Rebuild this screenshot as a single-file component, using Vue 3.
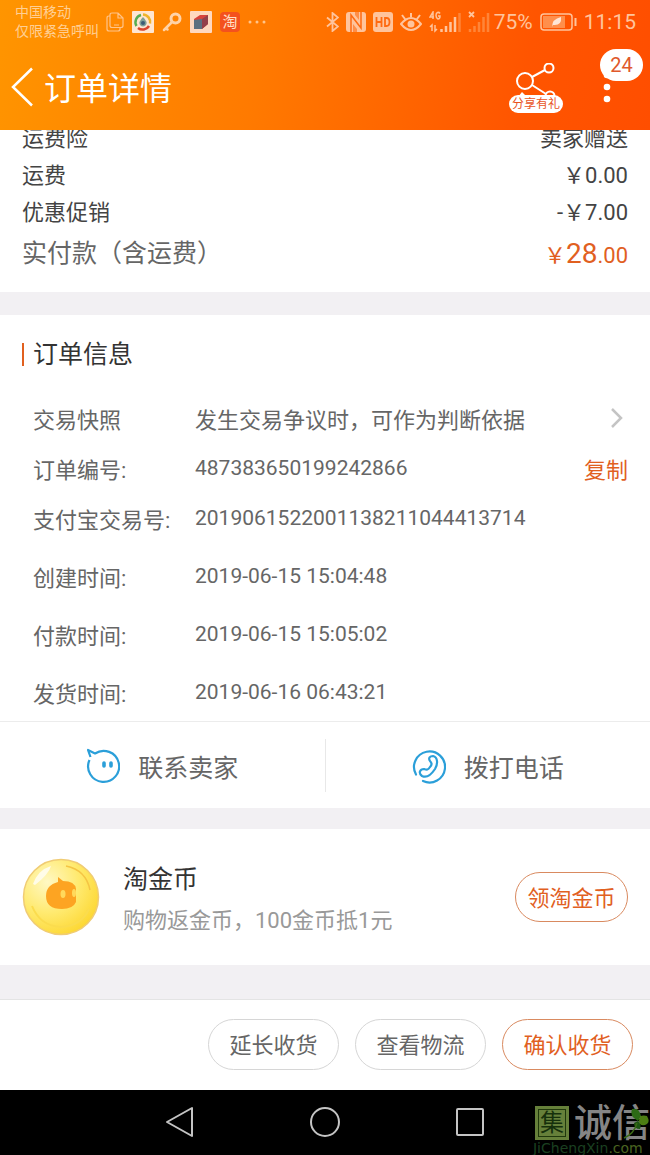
<script setup>
const fees = [
  { label: '运费险', value: '卖家赠送' },
  { label: '运费', value: '￥0.00' },
  { label: '优惠促销', value: '-￥7.00' },
]

const details = [
  { label: '订单编号:', value: '487383650199242866', copy: true },
  { label: '支付宝交易号:', value: '2019061522001138211044413714' },
  { label: '创建时间:', value: '2019-06-15 15:04:48', spaced: true },
  { label: '付款时间:', value: '2019-06-15 15:05:02', spaced: true },
  { label: '发货时间:', value: '2019-06-16 06:43:21', spaced: true },
]

const actions = [
  { text: '延长收货' },
  { text: '查看物流' },
  { text: '确认收货', primary: true },
]
</script>

<template>
  <div class="page">
    <header class="top">
      <div class="status">
        <div class="carrier">
          <div>中国移动</div>
          <div>仅限紧急呼叫</div>
        </div>
        <div class="notices">
          <svg width="18" height="20" viewBox="0 0 18 20" fill="none" stroke="#ffc48a" stroke-width="1.2">
            <path d="M6 1h6l5 5v7.500q0 2-2 2H6q-2 0-2-2V3q0-2 2-2zM12 1v5h5M4 4H3Q1 4 1 6v11q0 2 2 2h9q2 0 2-2v-1M8 13h5" />
          </svg>
          <svg width="22" height="22" viewBox="0 0 22 22">
            <rect width="22" height="22" rx="1" fill="#ffe6d2" />
            <path d="M4.500 15A7.500 7.500 0 0 1 9 4" fill="none" stroke="#58ad50" stroke-width="2.500" />
            <path d="M11 3.500a7.500 7.500 0 0 1 7 9" fill="none" stroke="#efb42c" stroke-width="2.500" />
            <path d="M17 15a7.500 7.500 0 0 1-11 2" fill="none" stroke="#d9452d" stroke-width="2.500" />
            <path d="M11 6q5 5 3 8-3 3-6 0-2-3 3-8z" fill="#7fa097" />
            <circle cx="11" cy="12" r="2" fill="#3c5a75" />
          </svg>
          <svg width="20" height="20" viewBox="0 0 20 20" fill="none" stroke="#ffd3a8" stroke-linecap="round">
            <circle cx="13.500" cy="6.500" r="4.500" stroke-width="3" />
            <path d="M10 10l-8 8M4 16l1.500 1.500" stroke-width="2.500" />
          </svg>
          <svg width="22" height="22" viewBox="0 0 22 22">
            <rect width="22" height="22" rx="1" fill="#ffd9c0" />
            <path d="M4 8l6-4h8v9l-6 5H4z" fill="#d8433d" />
            <path d="M4 9l8-1v10H4z" fill="#5d7180" />
            <path d="M12 8l6-4v9l-6 5z" fill="#94404a" />
          </svg>
          <span class="tao">淘</span>
          <svg width="18" height="4" viewBox="0 0 18 4" fill="#ffc48a">
            <circle cx="2" cy="2" r="1.500" /><circle cx="9" cy="2" r="1.500" /><circle cx="16" cy="2" r="1.500" />
          </svg>
        </div>
        <div class="system">
          <svg width="13" height="20" viewBox="0 0 13 20" fill="none" stroke="#ffc49c" stroke-width="1.800">
            <path d="M1 5.500l11 9-5.500 4.500V1L12 5.500l-11 9" />
          </svg>
          <svg width="20" height="20" viewBox="0 0 20 20">
            <rect width="20" height="20" rx="3" fill="#ffc49c" />
            <path d="M5 20V3l10 13V0" fill="none" stroke="#ff6a10" stroke-width="1.500" />
            <path d="M9 3l4 5V0H9zM7 20v-8l4 5v3z" fill="#ff6a10" opacity="0.600" />
          </svg>
          <svg width="20" height="20" viewBox="0 0 20 20">
            <rect width="20" height="20" rx="3" fill="#ffc49c" />
            <path d="M3.500 5v10M8.500 5v10M3.500 10h5M12 6v8h1.500q3 0 3-4t-3-4z" fill="none" stroke="#ff6a10" stroke-width="1.800" />
          </svg>
          <svg width="22" height="20" viewBox="0 0 22 20" fill="none" stroke="#ffc49c" stroke-width="2">
            <path d="M1 12q10-12 20 0-10 12-20 0zM11 5V1M5 7L2 3M17 7l3-4" />
            <circle cx="11" cy="12" r="3.500" fill="#ffc49c" stroke="none" />
          </svg>
          <svg width="32" height="22" viewBox="0 0 32 22" fill="none" stroke="#ffc49c" stroke-width="1.500">
            <path d="M4 8V1L1 6h4M11 2.500Q10 1 8.500 1.500 7 2 7 4.500T9 8q2 0 2-3H9" />
            <path d="M3 20v-6l-2 2M6 14v6l2-2" />
            <path d="M12.500 21v-3M17 21v-6M21.500 21V11M26 21V6" stroke-width="2.500" />
            <path d="M30.500 21V2" stroke="#ff8538" stroke-width="2.500" />
          </svg>
          <svg width="22" height="22" viewBox="0 0 22 22" fill="none" stroke="#ff8538" stroke-width="2.500">
            <path d="M1 1l5 5M6 1L1 6" stroke="#ffc49c" stroke-width="1.800" />
            <path d="M2 21v-3M6.500 21v-6M11 21V11M15.500 21V6M20 21V2" />
          </svg>
          <span class="percent">75%</span>
          <svg width="37" height="18" viewBox="0 0 37 18">
            <rect x="1" y="1" width="31" height="16" rx="3" fill="none" stroke="#ffc49c" stroke-width="1.500" />
            <rect x="3" y="3" width="22" height="12" fill="#ff8f4c" />
            <path d="M12 14q0-8 9-10 1 9-8 8z" fill="#ffe6d6" />
            <path d="M35.500 5v8" stroke="#ffc49c" stroke-width="2" />
          </svg>
          <span>11:15</span>
        </div>
      </div>

      <div class="titlebar">
        <button class="back" aria-label="返回">
          <svg width="22" height="40" viewBox="0 0 22 40" fill="none" stroke="#fff" stroke-width="2.500">
            <path d="M21 1.500L2 20l19 18.500" />
          </svg>
        </button>
        <h1>订单详情</h1>
        <button class="share">
          <svg width="54" height="38" viewBox="0 0 54 38" fill="none" stroke="#fff" stroke-width="2">
            <circle cx="16" cy="18" r="8" />
            <circle cx="40" cy="5" r="4.500" />
            <circle cx="41" cy="33" r="4.500" />
            <path d="M23 14l13-7M23 22l14 9" />
            <path d="M9 34l4-5 5 5z" fill="#fff" stroke="none" />
          </svg>
          <span>分享有礼</span>
        </button>
        <button class="more" aria-label="更多">
          <svg width="8" height="32" viewBox="0 0 8 32" fill="#fff">
            <circle cx="4" cy="4" r="3.300" /><circle cx="4" cy="16" r="3.300" /><circle cx="4" cy="28" r="3.300" />
          </svg>
          <span class="badge">24</span>
        </button>
      </div>
    </header>

    <main>
      <section class="fees">
        <div class="fee-list">
          <div v-for="fee in fees" :key="fee.label" class="fee">
            <span>{{ fee.label }}</span>
            <span>{{ fee.value }}</span>
          </div>
          <div class="fee total">
            <span>实付款（含运费）</span>
            <span class="price">￥<span class="yuan">28</span>.00</span>
          </div>
        </div>
      </section>

      <section class="info">
        <h2>订单信息</h2>
        <a class="row" href="#">
          <span class="label">交易快照</span>
          <span class="note">发生交易争议时，可作为判断依据</span>
          <svg width="14" height="22" viewBox="0 0 14 22" fill="none" stroke="#c4c4c4" stroke-width="2.500">
            <path d="M2 2l9 9-9 9" />
          </svg>
        </a>
        <div v-for="item in details" :key="item.label" class="row" :class="{ spaced: item.spaced }">
          <span class="label">{{ item.label }}</span>
          <span class="value">{{ item.value }}</span>
          <button v-if="item.copy" class="copy">复制</button>
        </div>
      </section>

      <section class="contact">
        <button>
          <svg width="34" height="36" viewBox="0 0 34 36" fill="none" stroke="#2b9fd9" stroke-width="2.200" stroke-linejoin="round">
            <path d="M3.500 12A15.500 15.500 0 1 0 9 5.500L2 2l2.500 7" />
            <path d="M18 15v3M25 15v3" stroke-width="3.600" stroke-linecap="round" />
          </svg>
          <span>联系卖家</span>
        </button>
        <button>
          <svg width="34" height="36" viewBox="0 0 34 36" fill="none" stroke="#2b9fd9" stroke-width="2.200" stroke-linecap="round" stroke-linejoin="round">
            <path d="M4 26.500A15.500 15.500 0 1 1 11 33" />
            <path d="M18 13c-2-3 0-5 3-5 5 1 5 8 2 13-4 6-9 9-13 7-4-3-2-7 2-7 3 1 4 1 6-2 2-2 2-4 0-6z" />
          </svg>
          <span>拨打电话</span>
        </button>
      </section>

      <section class="coin">
        <svg width="78" height="78" viewBox="0 0 78 78">
          <defs>
            <radialGradient id="gold" cx="32%" cy="30%" r="75%">
              <stop offset="0" stop-color="#fff8c4" />
              <stop offset="0.550" stop-color="#ffea70" />
              <stop offset="1" stop-color="#fdd835" />
            </radialGradient>
          </defs>
          <circle cx="39" cy="39" r="37.500" fill="url(#gold)" stroke="#f0cc74" stroke-width="1.500" />
          <path d="M44 8q20 4 24 24" fill="none" stroke="#f5c544" stroke-width="1.500" />
          <path d="M10 48q8 20 29 21 20-1 28-18" fill="none" stroke="#fbdc4e" stroke-width="2" />
          <path d="M11 26Q16 12 29 8q-2 8-16 19z" fill="#fffce8" />
          <path d="M36 19l5 4q12 0 13 8v13q-3 7-14 7-16 0-16-13 0-11 12-14z" fill="#fda422" />
          <ellipse cx="41" cy="36" rx="2.500" ry="4" fill="#ffd95c" />
          <ellipse cx="52" cy="35" rx="2" ry="4" fill="#ffd95c" />
        </svg>
        <div class="coin-text">
          <h3>淘金币</h3>
          <p>购物返金币，100金币抵1元</p>
        </div>
        <button class="pill primary get">领淘金币</button>
      </section>
    </main>

    <footer class="actions">
      <button v-for="action in actions" :key="action.text" class="pill" :class="{ primary: action.primary }">
        {{ action.text }}
      </button>
    </footer>

    <nav class="system-nav">
      <button aria-label="后退">
        <svg width="32" height="32" viewBox="0 0 32 32"><path d="M3 16L28 2v28z" /></svg>
      </button>
      <button aria-label="主页">
        <svg width="32" height="32" viewBox="0 0 32 32"><circle cx="16" cy="16" r="14" /></svg>
      </button>
      <button aria-label="最近任务">
        <svg width="32" height="32" viewBox="0 0 32 32"><rect x="3" y="3" width="26" height="26" rx="1" /></svg>
      </button>
      <div class="mark">
        <div class="mark-name">
          <span class="seal">集</span>
          <span>诚信</span>
          <svg class="leaf" width="28" height="34" viewBox="0 0 28 34">
            <path d="M16 14Q7 9 10 2q7-2 9 7z" fill="#2c6a16" />
            <path d="M17 14q0-7 8-5 4 7-2 9-6 1-6-4z" fill="#4c7d12" />
            <path d="M16 14q4 4 2 8-6 0-6-6z" fill="#1e5512" />
            <path d="M15 16Q12 27 2 31" fill="none" stroke="#3c6a16" stroke-width="1.500" />
          </svg>
        </div>
        <div class="mark-site">JiChengXin<span>.com</span></div>
      </div>
    </nav>
  </div>
</template>

<style>
body {
  margin: 0;
  background: #f2f0f3;
}
</style>

<style scoped>
.page {
  font-family: Roboto, "Noto Sans CJK SC", sans-serif;
  font-size: 22px;
  color: #444;
}

h1, h2, h3, p {
  margin: 0;
  font-weight: 400;
}

button {
  padding: 0;
  border: 0;
  background: none;
  font: inherit;
  color: inherit;
}

svg {
  display: block;
  flex: none;
}

.top {
  background: linear-gradient(100deg, #ff9500 0%, #ff7a00 40%, #ff5500 80%, #ff4e00 100%);
  color: #fff;
}

.status {
  display: flex;
  align-items: center;
  height: 44px;
  padding: 0 14px 0 15px;
  color: #ffc49c;
}

.carrier {
  font-size: 14px;
  line-height: 19px;
  color: #ffcf94;
}

.notices {
  display: flex;
  align-items: center;
  gap: 8px;
  margin-left: 7px;
}

.tao {
  width: 20px;
  border-radius: 4px;
  background: #f4511e;
  color: #ffe0c8;
  font-size: 15px;
  line-height: 20px;
  text-align: center;
}

.system {
  display: flex;
  align-items: center;
  gap: 7px;
  margin-left: auto;
  font-size: 21px;
  line-height: 44px;
}

.percent {
  margin-left: -3px;
}

.titlebar {
  display: flex;
  align-items: center;
  height: 86px;
  padding: 0 33px 0 11px;
}

.titlebar h1 {
  flex: 1;
  margin-left: 11px;
  padding-top: 4px;
  font-size: 32px;
  line-height: 40px;
}

.share {
  display: flex;
  flex-direction: column;
  width: 54px;
  margin-right: 34px;
  padding-top: 2px;
}

.share svg {
  margin-bottom: -6px;
}

.share span {
  position: relative;
  border-radius: 9px;
  background: #fff;
  color: #e8541e;
  font-size: 12px;
  line-height: 18px;
  text-align: center;
}

.more {
  position: relative;
  width: 20px;
}

.more svg {
  margin: 0 auto;
}

.badge {
  position: absolute;
  top: -22px;
  left: 3px;
  width: 43px;
  border-radius: 16px;
  background: #fff;
  color: #e0592b;
  font-size: 20px;
  line-height: 32px;
  text-align: center;
}

.fees {
  overflow: hidden;
  padding: 0 22px 13px;
  background: #fff;
}

.fee-list {
  margin-top: -10px;
}

.fee {
  display: flex;
  justify-content: space-between;
  line-height: 37px;
}

.total {
  font-size: 25px;
  line-height: 46px;
  color: #666;
}

.price {
  color: #e1601f;
  font-size: 22px;
}

.yuan {
  font-size: 28px;
}

.info {
  margin-top: 23px;
  padding: 24px 22px 4px;
  background: #fff;
}

.info h2 {
  display: flex;
  align-items: center;
  gap: 9px;
  margin-bottom: 23px;
  color: #333;
  font-size: 25px;
  line-height: 31px;
}

.info h2::before {
  content: "";
  width: 2px;
  height: 23px;
  background: #e1601f;
}

.row {
  display: flex;
  align-items: center;
  height: 50px;
  padding-left: 11px;
  color: #666;
  text-decoration: none;
}

.spaced {
  margin-top: 8px;
}

.label {
  width: 162px;
}

.note,
.value {
  flex: 1;
}

.value {
  font-size: 21px;
}

.row svg {
  margin-right: 4px;
}

.copy {
  color: #e1601f;
}

.contact {
  display: flex;
  border-top: 1px solid #ececec;
  padding: 17px 0 16px;
  background: #fff;
  color: #666;
  font-size: 25px;
}

.contact button {
  display: flex;
  flex: 1;
  align-items: center;
  justify-content: center;
  gap: 18px;
  height: 53px;
}

.contact button + button {
  border-left: 1px solid #e8e8e8;
}

.coin {
  display: flex;
  align-items: center;
  margin-top: 21px;
  padding: 24px 22px;
  background: #fff;
}

.coin-text {
  flex: 1;
  margin-left: 23px;
  padding-top: 6px;
  line-height: 41px;
}

.coin-text h3 {
  color: #333;
  font-size: 25px;
}

.coin-text p {
  color: #999;
}

.pill {
  width: 131px;
  height: 51px;
  padding-bottom: 3px;
  border: 1px solid #d6d6d6;
  border-radius: 26px;
  color: #666;
}

.primary {
  border-color: #d98a60;
  color: #e1601f;
}

.get {
  width: 113px;
  height: 50px;
}

.actions {
  display: flex;
  justify-content: flex-end;
  gap: 16px;
  margin-top: 34px;
  padding: 19px 17px 20px;
  border-top: 1px solid #e4e4e4;
  background: #fff;
}

.system-nav {
  position: relative;
  display: flex;
  justify-content: center;
  gap: 113px;
  padding: 16px 0 17px;
  background: #000;
}

.system-nav button svg {
  fill: none;
  stroke: #c4c4c4;
  stroke-width: 2;
  stroke-linejoin: round;
}

.mark {
  position: absolute;
  right: 0;
  bottom: 0;
}

.mark-name {
  position: relative;
  display: flex;
  align-items: center;
  gap: 5px;
  color: #858585;
  font-size: 38px;
  font-weight: 500;
  line-height: 36px;
}

.seal {
  margin-left: 2px;
  border: 2px solid #66803a;
  outline: 1px solid #20380c;
  outline-offset: -4px;
  width: 30px;
  background: #66803a;
  color: #16300c;
  font-size: 24px;
  font-weight: 400;
  line-height: 30px;
  text-align: center;
}

.leaf {
  position: absolute;
  top: 2px;
  right: 0;
}

.mark-site {
  color: #1b4020;
  font-family: "DejaVu Sans", sans-serif;
  font-size: 14px;
  line-height: 14px;
}

.mark-site span {
  color: #4b6420;
}
</style>
